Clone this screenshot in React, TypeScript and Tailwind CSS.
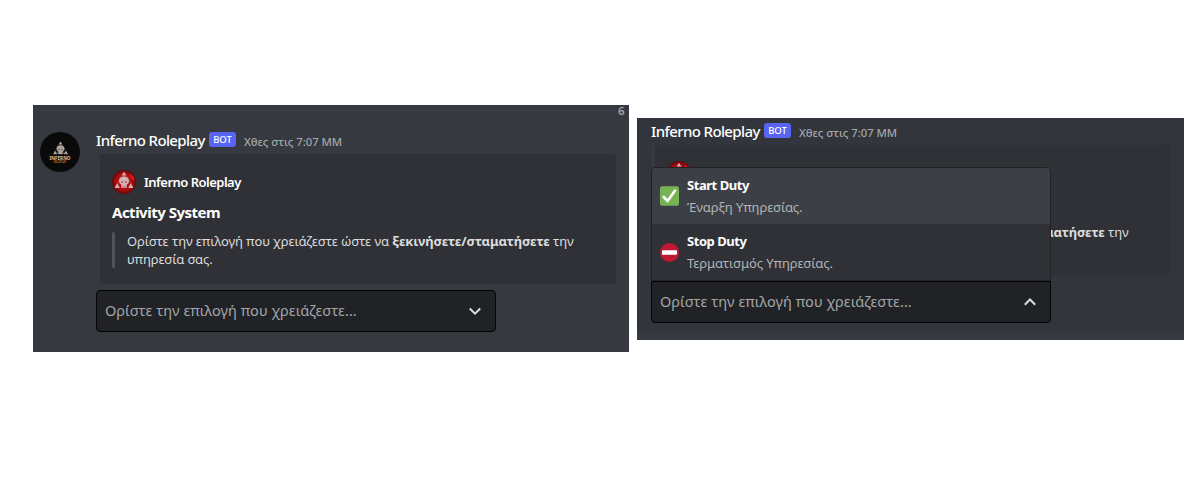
import type { ReactNode } from 'react';

function Emblem({ className }: { className: string }) {
  return (
    <g className={className}>
      <path d="M12 1.8 14.4 5.6H9.6ZM2.6 18 5.2 13 7.8 18ZM16.2 18 18.8 13 21.4 18Z" fill="currentColor" />
      <path d="M9.4 5.6 5.4 13M14.6 5.6 18.6 13" stroke="currentColor" strokeOpacity="0.3" strokeWidth="0.8" fill="none" />
      <path d="M12 6.4C8.4 6.4 6.8 8.8 7 11.6 7.2 13.4 8.2 14.2 9.2 14.6V17.8H14.8V14.6C15.8 14.2 16.8 13.4 17 11.6 17.2 8.8 15.6 6.4 12 6.4Z" fill="currentColor" />
    </g>
  );
}

function Avatar() {
  return (
    <div className="h-10 w-10 shrink-0 overflow-hidden rounded-full bg-[#0b0a0b] pt-[8px]">
      <svg viewBox="0 0 24 20" className="mx-auto h-4 w-[19px]">
        <Emblem className="text-[#aaa39f]" />
        <circle cx="10.1" cy="12" r="1" fill="#5d544e" />
        <circle cx="13.9" cy="12" r="1" fill="#5d544e" />
        <path d="M7.2 15.4 9.2 17.6M16.8 15.4 14.8 17.6" stroke="#c28a4b" strokeWidth="1" fill="none" />
      </svg>
      <div className="h-[5px] text-center text-[4.6px] leading-[5px] font-bold text-[#d9c0ab]">INFERNO</div>
      <div className="h-[3px] text-center text-[2.5px] leading-[3px] font-bold text-[#b8681f]">ROLEPLAY</div>
    </div>
  );
}

function AuthorIcon() {
  return (
    <svg viewBox="0 0 24 24" className="h-6 w-6 shrink-0">
      <defs>
        <radialGradient id="crimson">
          <stop offset="0" stopColor="#c3161a" />
          <stop offset="0.7" stopColor="#a80c10" />
          <stop offset="1" stopColor="#5d0709" />
        </radialGradient>
      </defs>
      <circle cx="12" cy="12" r="12" fill="url(#crimson)" />
      <path d="M17 2.5 21.5 7 22.8 11 19 8ZM2 15 5 20 9 22.5 4 19Z" fill="#e31b20" />
      <Emblem className="text-[#d5b1b1]" />
      <circle cx="10.1" cy="12.1" r="1" fill="#b05a5b" />
      <circle cx="13.9" cy="12.1" r="1" fill="#b05a5b" />
      <path d="M11 15.4V17.4M13 15.4V17.4" stroke="#ad5557" strokeWidth="0.6" />
    </svg>
  );
}

function Header() {
  return (
    <div className="flex h-[22px] items-center whitespace-nowrap">
      <span className="mb-[2px] w-[113px] text-[15px] leading-5 font-medium tracking-[-0.62px] text-white">Inferno Roleplay</span>
      <span className="mb-[3px] flex h-[15px] w-[27px] items-center justify-center rounded-[3px] bg-[#5865f2] text-[9.5px] leading-[15px] font-medium text-white">BOT</span>
      <span className="ml-[8px] pt-[2px] text-[11.25px] leading-[20px] font-medium text-[#a3a6aa]">Χθες στις 7:07 MM</span>
    </div>
  );
}

function Embed() {
  return (
    <div className="h-[130px] w-[520px] rounded-[4px] border-l-4 border-[#36393f] bg-[#2f3136] pt-4 pl-3">
      <div className="flex h-6 items-center gap-2">
        <AuthorIcon />
        <span className="text-[13px] leading-5 font-semibold tracking-[-0.52px] text-white">Inferno Roleplay</span>
      </div>
      <div className="mt-[7px] text-[15px] leading-[22px] font-bold tracking-[-0.5px] text-white">Activity System</div>
      <div className="mt-[9px] flex h-9">
        <div className="w-[3px] rounded-[3px] bg-[#4f545c]" />
        <p className="ml-[12px] text-[13px] leading-[18px] tracking-[-0.1px] whitespace-nowrap text-[#dcddde]">
          Ορίστε την επιλογή που χρειάζεστε ώστε να <b className="tracking-[-0.12px]">ξεκινήσετε/σταματήσετε</b> την
          <br />
          υπηρεσία σας.
        </p>
      </div>
    </div>
  );
}

function Select({ open = false }: { open?: boolean }) {
  return (
    <div className={`flex h-[42px] w-[400px] items-center justify-between border border-[#040405] bg-[#202225] pr-[14px] pl-[8px] ${open ? 'rounded-b-[4px]' : 'rounded-[4px]'}`}>
      <span className="pb-[2px] text-[14.5px] leading-5 tracking-[0.04px] text-[#a3a6aa]">Ορίστε την επιλογή που χρειάζεστε...</span>
      <svg viewBox="0 0 12 12" className="h-3 w-3" fill="none" stroke="#dcddde" strokeWidth="2">
        <path d={open ? 'M0.8 8.7 6 3.5 11.2 8.7' : 'M0.8 3.5 6 8.7 11.2 3.5'} />
      </svg>
    </div>
  );
}

function Option({ icon, title, text, active = false }: { icon: ReactNode; title: string; text: string; active?: boolean }) {
  return (
    <div className={`flex h-14 items-center gap-2 pl-[8px] ${active ? 'bg-[#3c3f45]' : 'bg-[#2f3136]'}`}>
      {icon}
      <div className="pb-[1px]">
        <div className="text-[13px] leading-[22px] font-bold tracking-[-0.46px] text-white">{title}</div>
        <div className="text-[13px] leading-[22px] tracking-[-0.08px] text-[#b2b5b9]">{text}</div>
      </div>
    </div>
  );
}

const check = (
  <svg viewBox="0 0 19 20" className="h-5 w-[19px] shrink-0">
    <rect y="0.3" width="19" height="19.4" rx="2" fill="#77b255" />
    <path d="M3.8 11 7.6 15 15 4.5" fill="none" stroke="#fff" strokeWidth="2.6" strokeLinecap="round" strokeLinejoin="round" />
  </svg>
);

const noEntry = (
  <svg viewBox="0 0 19 19" className="h-[19px] w-[19px] shrink-0">
    <circle cx="9.5" cy="9.5" r="9.5" fill="#be1931" />
    <rect x="2" y="7.3" width="15" height="4.4" rx="0.6" fill="#fff" />
  </svg>
);

export default function App() {
  return (
    <main className="flex h-[500px] w-[1200px] items-start gap-2 overflow-hidden bg-white pt-[105px] pl-[33px] font-['Noto_Sans',sans-serif]">
      <section className="h-[247px] w-[596px] bg-[#36393f]">
        <div className="flex h-[11px] items-center">
          <div className="ml-[7px] h-px w-[575px] bg-[#42454a]" />
          <span className="ml-[3px] text-[11.5px] leading-[11px] font-semibold text-[#a3a6aa]">6</span>
        </div>
        <div className="flex gap-4 pt-[14px] pl-[7px]">
          <div className="pt-[2px]">
            <Avatar />
          </div>
          <div>
            <Header />
            <div className="mt-[2px]">
              <Embed />
            </div>
            <div className="mt-[6px]">
              <Select />
            </div>
          </div>
        </div>
      </section>

      <section className="mt-[13px] h-[222px] w-[547px] bg-[#36393f]">
        <div className="h-[213px] bg-[#32353b] pt-[3px] pl-[14px]">
          <Header />
          <div className="mt-[2px]">
            <Embed />
          </div>
          <div className="relative mt-[6px] w-[400px]">
            <Select open />
            <div className="absolute bottom-[42px] left-0 w-[400px] overflow-hidden rounded-t-[4px] border border-[#202225]">
              <Option active icon={check} title="Start Duty" text="Έναρξη Υπηρεσίας." />
              <Option icon={noEntry} title="Stop Duty" text="Τερματισμός Υπηρεσίας." />
            </div>
          </div>
        </div>
      </section>
    </main>
  );
}
